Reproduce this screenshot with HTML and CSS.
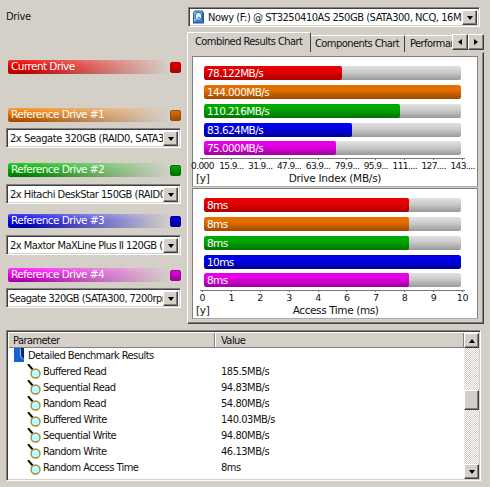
FILE: index.html
```html
<!DOCTYPE html>
<html lang="en">
<head>
<meta charset="utf-8">
<title>Drive Benchmark</title>
<link rel="stylesheet" href="styles.css">
</head>
<body>
<svg class="defs" width="0" height="0">
  <symbol id="lens" viewBox="0 0 16 16"><path d="M1 0l5 6" stroke="#151515" stroke-width="2"/><circle cx="8.500" cy="9.500" r="4.500" fill="#b5fbff" stroke="#a18b42" stroke-width="1.4"/><path d="M7.5 9l2-1" stroke="#fff"/></symbol>
</svg>
<main class="app">
  <div class="top">
    <aside class="drives">
      <div class="caption"><span class="t-drive">Drive</span></div>
      <div class="drive red"><div class="label"><span>Current Drive</span></div><i></i></div>
      <div class="drive orange"><div class="label"><span>Reference Drive #1</span></div><i></i></div>
      <div class="combo c1"><span>2x Seagate 320GB (RAID0, SATA300)</span><button class="btn down"></button></div>
      <div class="drive green"><div class="label"><span>Reference Drive #2</span></div><i></i></div>
      <div class="combo c2"><span>2x Hitachi DeskStar 150GB (RAID0)</span><button class="btn down"></button></div>
      <div class="drive blue"><div class="label"><span>Reference Drive #3</span></div><i></i></div>
      <div class="combo c3"><span>2x Maxtor MaXLine Plus II 120GB (RAID0)</span><button class="btn down"></button></div>
      <div class="drive magenta"><div class="label"><span>Reference Drive #4</span></div><i></i></div>
      <div class="combo c4"><span>Seagate 320GB (SATA300, 7200rpm)</span><button class="btn down"></button></div>
    </aside>
    <section class="right">
      <div class="combo main-combo">
        <svg class="disk" viewBox="0 0 12 14"><path d="M2 0h8l2 2v12H0V2z" fill="#1b5fa8"/><path d="M2 1h7l1 1v10H1V2z" fill="#8dc0ee"/><path d="M2.500 9V5q0-3 3.500-3t3.500 3v5L6 7" fill="#e6f4ff" stroke="#174f94"/><path d="M3 11h6" stroke="#174f94"/></svg>
        <span>Nowy (F:) @ ST3250410AS 250GB (SATA300, NCQ, 16MB)</span><button class="btn down"></button>
      </div>
      <div class="tabs">
        <div class="tab active"><span>Combined Results Chart</span></div>
        <div class="tab second"><span>Components Chart</span></div>
        <div class="tab third"><span>Performance</span></div>
        <div class="spin"><button class="btn left"></button><button class="btn rightward"></button></div>
      </div>
      <div class="panel">
        <div class="chart speed">
          <div class="bar red"><b class="w1"></b><span>78.122MB/s</span></div>
          <div class="bar orange"><b class="full"></b><span>144.000MB/s</span></div>
          <div class="bar green"><b class="w3"></b><span>110.216MB/s</span></div>
          <div class="bar blue"><b class="w4"></b><span>83.624MB/s</span></div>
          <div class="bar magenta"><b class="w5"></b><span>75.000MB/s</span></div>
          <div class="axis"><span>0.000</span><span>15.9...</span><span>31.9...</span><span>47.9...</span><span>63.9...</span><span>79.9...</span><span>95.9...</span><span>111....</span><span>127....</span><span>143....</span></div>
          <div class="foot"><span>[y]</span><span class="name">Drive Index (MB/s)</span></div>
        </div>
        <div class="chart access">
          <div class="bar red"><b class="w8"></b><span>8ms</span></div>
          <div class="bar orange"><b class="w8"></b><span>8ms</span></div>
          <div class="bar green"><b class="w8"></b><span>8ms</span></div>
          <div class="bar blue"><b class="full"></b><span>10ms</span></div>
          <div class="bar magenta"><b class="w8"></b><span>8ms</span></div>
          <div class="axis"><span>0</span><span>1</span><span>2</span><span>3</span><span>4</span><span>6</span><span>7</span><span>8</span><span>9</span><span>10</span></div>
          <div class="foot"><span>[y]</span><span class="name">Access Time (ms)</span></div>
        </div>
      </div>
    </section>
  </div>
  <section class="results">
    <div class="list">
      <div class="head"><div>Parameter</div><div>Value</div></div>
      <div class="group"><svg viewBox="0 0 10 14"><path d="M0 0h10v14H0z" fill="#1263d6"/><path d="M7 0h3v11q-3-1-3-4z" fill="#10246a"/><path d="M6.500 1v6q0 3 3 4" fill="none" stroke="#9cc8ff"/></svg><span>Detailed Benchmark Results</span></div>
      <div class="row"><svg><use href="#lens"/></svg><span>Buffered Read</span><em>185.5MB/s</em></div>
      <div class="row"><svg><use href="#lens"/></svg><span>Sequential Read</span><em>94.83MB/s</em></div>
      <div class="row"><svg><use href="#lens"/></svg><span>Random Read</span><em>54.80MB/s</em></div>
      <div class="row"><svg><use href="#lens"/></svg><span>Buffered Write</span><em>140.03MB/s</em></div>
      <div class="row"><svg><use href="#lens"/></svg><span>Sequential Write</span><em>94.80MB/s</em></div>
      <div class="row"><svg><use href="#lens"/></svg><span>Random Write</span><em>46.13MB/s</em></div>
      <div class="row"><svg><use href="#lens"/></svg><span>Random Access Time</span><em>8ms</em></div>
    </div>
    <div class="scroll"><button class="btn up"></button><div class="thumb"></div><button class="btn down"></button></div>
  </section>
</main>
</body>
</html>
```
FILE: styles.css
```css
* { box-sizing: border-box; }
body { margin: 0; background: #d4d0c8; color: #111; font: 11px/14px "DejaVu Sans Condensed", "DejaVu Sans", sans-serif; letter-spacing: -0.55px; }
span, em { white-space: nowrap; font-style: normal; }
.defs { position: absolute; }
.app { width: 490px; height: 487px; overflow: hidden; padding: 7px 0 0 6px; }
.top { display: flex; height: 323px; }
.drives { width: 181px; }
.caption { height: 53px; padding-top: 3px; letter-spacing: -0.3px; }

.red { --c: #e60000; --d: #ad0000; --e: #f52a2a; }
.orange { --c: #e37000; --d: #9d4800; --e: #ff9b35; }
.green { --c: #00a900; --d: #007300; --e: #32cc32; }
.blue { --c: #0000e8; --d: #000098; --e: #4646ef; }
.magenta { --c: #e500e5; --d: #9e009e; --e: #ff38ff; }

.drive { display: flex; width: 173px; height: 14px; margin-left: 2px; }
.drive .label { width: 162px; height: 14px; padding-left: 3px; border-radius: 2px; color: #fff; font: 10.500px/12px "DejaVu Sans", sans-serif; letter-spacing: -0.55px; background: linear-gradient(90deg, transparent 10%, #d4d0c8 100%), linear-gradient(var(--e), var(--c) 45%, var(--d)); }
.drive i { width: 11px; height: 11px; margin-top: 2px; border: 1px solid var(--d); border-radius: 2px; background: linear-gradient(var(--c), var(--d)); }
.drive.orange { margin-top: 34px; }
.drive.green { margin-top: 15px; }
.drive.blue { margin-top: 10px; }
.drive.magenta { margin-top: 13px; }

.combo { display: flex; width: 175px; height: 20px; background: #fff; border: 1px solid; border-color: #808080 #fff #fff #808080; box-shadow: inset 1px 1px #404040, inset -1px -1px #d4d0c8; padding: 2px; }
.combo span { flex: 1; min-width: 0; overflow: hidden; padding-left: 1px; line-height: 15px; }
.c1 { margin-top: 6px; letter-spacing: -0.42px; }
.c2 { margin-top: 7px; letter-spacing: -0.5px; }
.c3 { margin-top: 7px; }
.c4 { margin-top: 6px; }
.c4 span { padding-left: 0; }
.main-combo { width: 292px; height: 20px; margin-left: 1px; }
.main-combo span { padding-left: 4px; letter-spacing: -0.45px; }
.disk { width: 11px; height: 14px; margin-left: 2px; }

.btn { display: flex; flex: none; align-items: center; justify-content: center; width: 15px; height: 15px; margin: 0; padding: 0; border: 1px solid; border-color: #fff #404040 #404040 #fff; background: #d4d0c8; box-shadow: inset -1px -1px #808080; border-radius: 0; }
.btn::after { content: ""; border: 3px solid transparent; }
.down::after { border-width: 4px 3.5px 0; border-top-color: #000; }
.up::after { border-width: 0 3.5px 4px; border-bottom-color: #000; }
.left::after { border-width: 3.5px 4px 3.5px 0; border-right-color: #000; }
.rightward::after { border-width: 3.5px 0 3.5px 4px; border-left-color: #000; }

.tabs { display: flex; align-items: flex-end; height: 25px; width: 297px; }
.tab { height: 17px; overflow: hidden; padding: 1px 0 0 3px; border-top: 1px solid #fff; border-right: 1px solid #404040; }
.active { width: 124px; height: 20px; padding: 2px 0 0 7px; border-left: 1px solid #fff; border-radius: 2px 2px 0 0; }
.second { width: 94px; padding-left: 4px; }
.third { width: 47px; padding-left: 5px; border-right: 0; }
.spin { display: flex; align-self: flex-start; margin-top: 7px; }
.spin .btn { width: 16px; height: 16px; }
.panel { width: 297px; height: 272px; padding: 3px 0 0 4px; border: 1px solid; border-color: #fff #404040 #404040 #fff; border-top-color: #d4d0c8; box-shadow: inset -1px -1px #808080; }

.chart { width: 286px; height: 131px; padding: 9px 0 0 11px; background: #fff; border: 1px solid #808080; border-bottom-color: #aaa; }
.access { margin-top: 1px; }
.bar { display: grid; width: 257px; height: 14px; margin-bottom: 4.850px; border-radius: 2px; background: linear-gradient(#e2e2e2, #cacaca 45%, #999); overflow: hidden; }
.bar b, .bar span { grid-area: 1 / 1; }
.bar b { height: 14px; border-radius: 2px; background: linear-gradient(var(--c), var(--c) 35%, var(--d)); }
.bar span { padding-left: 3px; color: #fff; font: 10.500px/14px "DejaVu Sans", sans-serif; letter-spacing: -0.6px; }
.w1 { width: 138px; }
.full { width: 257px; }
.w3 { width: 196px; }
.w4 { width: 148px; }
.w5 { width: 132px; }
.w8 { width: 205px; }
.axis { display: flex; width: 289px; height: 14px; margin: -2px 0 0 -16px; background: linear-gradient(#777, #777) 12px 0 / 265px 1px no-repeat; }
.axis span { flex: 1; min-width: 0; display: flex; flex-direction: column; align-items: center; font: 9.500px/12px "DejaVu Sans", sans-serif; letter-spacing: -0.2px; }
.axis span::before { content: ""; width: 1px; height: 2px; flex: none; background: #777; }
.speed .axis span { font-size: 9px; letter-spacing: -0.6px; }
.foot { display: flex; margin-left: -8px; font: 10.500px/12px "DejaVu Sans", sans-serif; letter-spacing: -0.25px; }
.foot .name { margin-left: 79px; }
.access .foot .name { margin-left: 83px; letter-spacing: -0.4px; }

.results { display: flex; width: 475px; height: 151px; background: #fff; border: 1px solid; border-color: #808080 #fff #fff #808080; box-shadow: inset 1px 1px #404040, inset -1px -1px #d4d0c8; padding: 2px 1px 1px 2px; }
.list { width: 456px; }
.head { display: flex; height: 15px; background: #d4d0c8; border-bottom: 1px solid #808080; letter-spacing: -0.55px; }
.head div { width: 206px; padding-left: 4px; line-height: 15px; border-right: 1px solid #808080; box-shadow: 1px 0 #fff; }
.head div + div { flex: 1; padding-left: 6px; box-shadow: none; }
.group, .row { display: flex; height: 16px; line-height: 16px; letter-spacing: -0.55px; }
.group { padding-left: 5px; }
.group svg { width: 10px; height: 14px; margin-right: 4px; }
.row svg { width: 16px; height: 16px; margin-left: 18px; }
.row span { width: 178px; }
.row em { letter-spacing: -0.45px; }
.scroll { display: flex; flex-direction: column; width: 15px; background: repeating-conic-gradient(#fff 0 25%, #d4d0c8 0 50%) 0 0 / 2px 2px; }
.thumb { height: 20px; margin: 42px 0 auto; background: #d4d0c8; border: 1px solid; border-color: #fff #404040 #404040 #fff; box-shadow: inset -1px -1px #808080; }
```
